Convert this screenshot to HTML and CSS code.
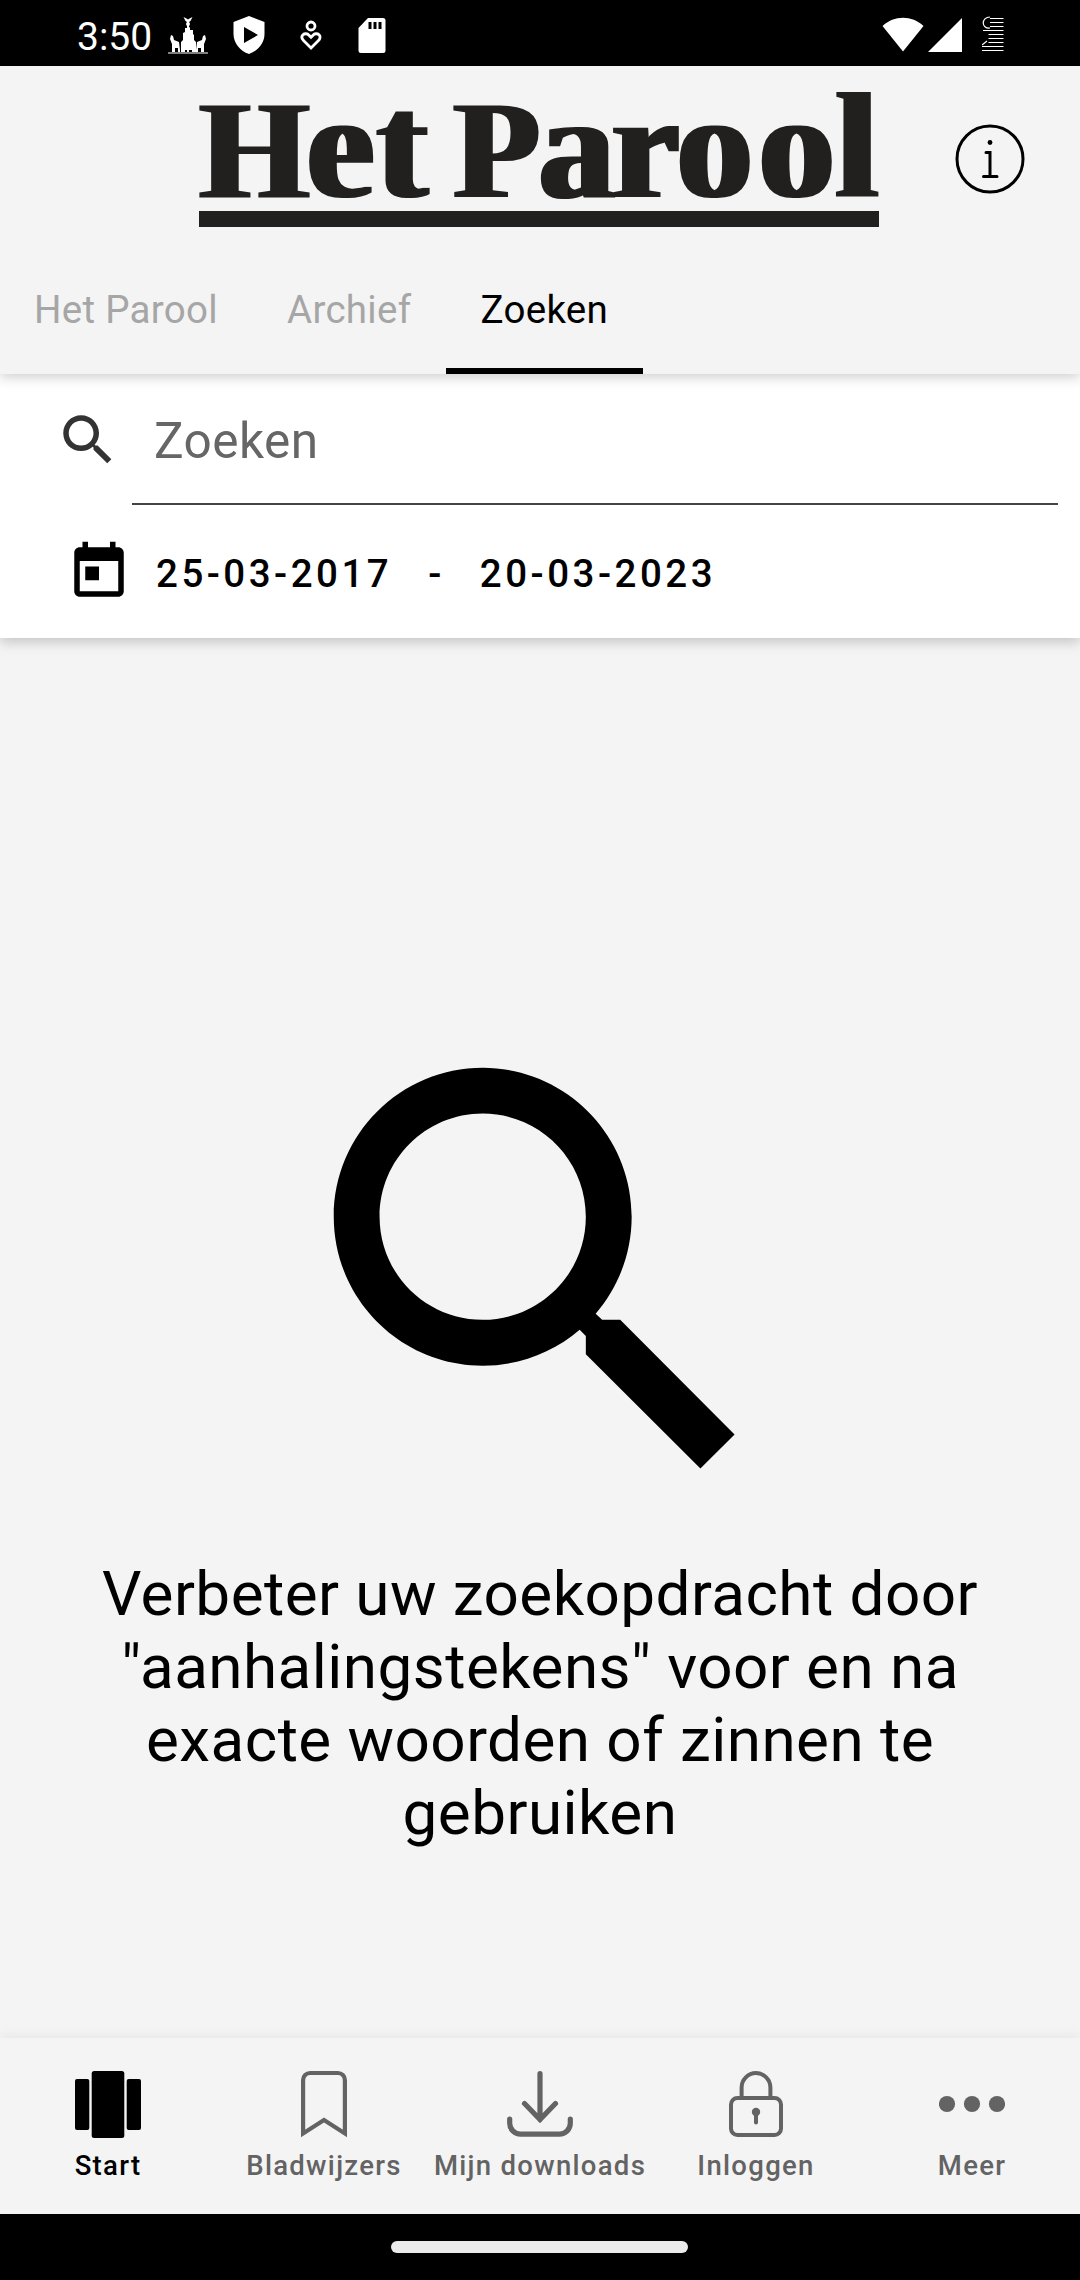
FILE: index.html
```html
<!DOCTYPE html>
<html lang="nl">
<head>
	<meta charset="utf-8">
	<title>Het Parool</title>
	<link rel="stylesheet" href="styles.css">
</head>
<body>
	<div class="statusbar">
		<span class="time">3:50</span>
		<svg class="ic-castle" width="42" height="38" viewBox="0 0 42 38" fill="#fff">
			<path d="M1 36.500h40v1H1zM5 36v-8l-2-5 1-4 2 1 1 4 5 2 1 8v2h-2v-4H8v4zM37 36v-8l2-5-1-4-2 1-1 4-5 2-1 8v2h2v-4h3v4z"/>
			<path d="M14 36V26l2-2v-7l2-1v-4h2l1-3 2 3v2h3v4l1 1v5l2 2v10h-4v-2h-3v2h-2v-2h-2v2z"/>
			<path d="M16.500 1l3 1.500 1.500 1 1.500-1 3-1.500-2 4-1.500 1v6h-2V6l-1.500-1z"/>
			<circle cx="21" cy="8" r="2"/>
		</svg>
		<svg class="ic-shield" width="32" height="38" viewBox="0 0 32 38" fill="#fff" fill-rule="evenodd">
			<path d="M16 0l15.500 6v12c0 9-6.500 17-15.500 20C7 35 .5 27 .5 18V6zM11 11v16l14-8z"/>
		</svg>
		<svg class="ic-heart" width="24" height="32" viewBox="0 0 24 32" fill="none" stroke="#fff" stroke-width="2.800">
			<circle cx="12" cy="6" r="4"/>
			<path d="M12 28l-7.500-7.500c-2-2-2-4.200-.5-5.700s4.500-1.500 6 .5l2 2 2-2c1.500-2 4.500-2 6-.5s1.500 3.700-.5 5.700z"/>
		</svg>
		<svg class="ic-sd" width="28" height="35" viewBox="0 0 28 35">
			<path fill="#fff" d="M10 0h15a2.500 2.500 0 0 1 2.500 2.500v30A2.500 2.500 0 0 1 25 35H3a2.500 2.500 0 0 1-2.500-2.500V10z"/>
			<path d="M10.500 4h3v7h-3zM15.500 4h3v7h-3zM20.500 4h3v7h-3z"/>
		</svg>
		<svg class="ic-wifi" width="42" height="35" viewBox="0 0 42 35" fill="#fff"><path d="M.5 9C12-2 30-2 41.500 9L21 34.500z"/></svg>
		<svg class="ic-signal" width="34" height="34" viewBox="0 0 34 34" fill="#fff"><path d="M34 0v34H0z"/></svg>
		<svg class="ic-battery" width="22" height="36" viewBox="0 0 22 36" fill="none" stroke="#fff" stroke-width="1.200">
			<path d="M8 2.500h13.500M8 6.500h13.500M8 10.500h13.500M1 14.500h20.500M6.500 18.500h15M6.500 22.500h15M6.500 26.500h15M0 30.500h21.500M0 34.500h21.500"/>
			<path d="M8 1C-1 1-1 13 8 12M0 29l5-4"/>
		</svg>
	</div>

	<div class="header">
		<svg class="logo" width="680" height="140" viewBox="0 0 680 140" fill="#21201e">
			<!-- thickens the stems only, serifs stay thin -->
			<filter id="fat" x="-5%" width="110%" color-interpolation-filters="sRGB"><feMorphology operator="dilate" radius="3 0"/></filter>
			<g class="logo-text" filter="url(#fat)">
				<text y="111" x="1 108 178"><tspan class="cap">H</tspan>et</text>
				<text y="111" x="255 340 413 478 560 637"><tspan class="cap">P</tspan>arool</text>
			</g>
			<rect y="125" width="680" height="16"/>
		</svg>
		<svg class="info" width="70" height="70" viewBox="0 0 70 70" fill="none" stroke="#000" stroke-width="3" stroke-linecap="round">
			<circle cx="35" cy="35" r="33"/>
			<path d="M31 28.500h4v24M28.500 52.500h13.500"/>
			<circle cx="35" cy="18.500" r="2.400" fill="#000" stroke="none"/>
		</svg>
		<div class="tabs">
			<div class="tab">Het Parool</div>
			<div class="tab">Archief</div>
			<div class="tab active">Zoeken</div>
		</div>
	</div>

	<div class="search">
		<div class="search-row">
			<svg width="66" height="66" viewBox="0 0 24 24" fill="#333"><path d="M15.500 14h-.79l-.28-.27C15.410 12.590 16 11.110 16 9.500 16 5.910 13.090 3 9.500 3S3 5.910 3 9.500 5.910 16 9.500 16c1.610 0 3.090-.59 4.230-1.570l.27.28v.79l5 4.990L20.490 19l-4.990-5zm-6 0C7.010 14 5 11.990 5 9.500S7.010 5 9.500 5 14 7.010 14 9.500 11.990 14 9.500 14z"/></svg>
			<div class="field">Zoeken</div>
		</div>
		<div class="date-row">
			<svg width="66" height="66" viewBox="0 0 24 24"><path d="M19 3h-1V1h-2v2H8V1H6v2H5c-1.110 0-1.990.9-1.990 2L3 19c0 1.100.89 2 2 2h14c1.100 0 2-.9 2-2V5c0-1.100-.9-2-2-2zm0 16H5V8h14v11zM7 10h5v5H7z"/></svg>
			<span class="date from">25-03-2017</span>
			<span class="date dash">-</span>
			<span class="date">20-03-2023</span>
		</div>
	</div>

	<div class="content">
		<svg width="550" height="550" viewBox="0 0 24 24"><path d="M15.500 14h-.79l-.28-.27C15.410 12.590 16 11.110 16 9.500 16 5.910 13.090 3 9.500 3S3 5.910 3 9.500 5.910 16 9.500 16c1.610 0 3.090-.59 4.230-1.570l.27.28v.79l5 4.990L20.490 19l-4.990-5zm-6 0C7.010 14 5 11.990 5 9.500S7.010 5 9.500 5 14 7.010 14 9.500 11.990 14 9.500 14z"/></svg>
		<p class="hint">Verbeter uw zoekopdracht door<br>"aanhalingstekens" voor en na<br>exacte woorden of zinnen te<br>gebruiken</p>
	</div>

	<div class="nav">
		<div class="nav-item active">
			<svg width="66" height="68" viewBox="0 0 66 68">
				<rect y="9" width="14.300" height="51" rx="2"/>
				<rect x="16.700" y="1" width="32.600" height="67" rx="2.500"/>
				<rect x="51.700" y="9" width="14.300" height="51" rx="2"/>
			</svg>
			<span>Start</span>
		</div>
		<div class="nav-item">
			<svg width="66" height="68" viewBox="0 0 66 68" fill="none" stroke="#636363" stroke-width="4.200">
				<path d="M12.100 63.500V10a7 7 0 0 1 7-7h27.800a7 7 0 0 1 7 7v53.500L33 50z"/>
			</svg>
			<span>Bladwijzers</span>
		</div>
		<div class="nav-item">
			<svg width="66" height="68" viewBox="0 0 66 68" fill="none" stroke="#636363" stroke-width="5.200" stroke-linecap="round">
				<path d="M33 3.500v46M17.500 33.500L33 49.500l15.500-16M2.700 49v4a11 11 0 0 0 11 11.200h38.600a11 11 0 0 0 11-11.200v-4"/>
			</svg>
			<span>Mijn downloads</span>
		</div>
		<div class="nav-item">
			<svg width="66" height="68" viewBox="0 0 66 68" fill="none" stroke="#636363" stroke-width="4">
				<rect x="8" y="28" width="50" height="37" rx="6.500"/>
				<path d="M18.600 28V17.500a14.400 14.400 0 0 1 28.800 0V28"/>
				<circle cx="33" cy="42" r="4.200" fill="#636363" stroke="none"/>
				<path d="M33 42v10.500" stroke-linecap="round"/>
			</svg>
			<span>Inloggen</span>
		</div>
		<div class="nav-item">
			<svg width="66" height="68" viewBox="0 0 66 68" fill="#636363">
				<circle cx="8" cy="34" r="8.100"/>
				<circle cx="33" cy="34" r="8.100"/>
				<circle cx="58" cy="34" r="8.100"/>
			</svg>
			<span>Meer</span>
		</div>
	</div>

	<div class="gesture"><div class="pill"></div></div>
</body>
</html>
```

FILE: styles.css
```css
* {
	box-sizing: border-box;
}

body {
	margin: 0;
	width: 1080px;
	height: 2280px;
	display: flex;
	flex-direction: column;
	overflow: hidden;
	background: #f4f4f4;
	color: #000;
	font-family: Roboto, sans-serif;
}

svg {
	display: block;
	flex: none;
}

.statusbar {
	height: 66px;
	display: flex;
	align-items: flex-start;
	padding: 16px 76px 0 77px;
	background: #000;
	color: #fff;
}

.time {
	width: 90px;
	margin-top: -1px;
	font-size: 39px;
	line-height: 44px;
}

.ic-shield {
	margin-left: 24px;
}

.ic-heart {
	margin: 4px 0 0 34px;
}

.ic-sd {
	margin: 2px 0 0 35px;
}

.ic-wifi {
	margin: 1px 4px 0 auto;
}

.ic-signal {
	margin: 2px 20px 0 0;
}

.header {
	position: relative;
	z-index: 2;
	height: 308px;
	display: grid;
	grid-template-columns: 199px 680px 1fr;
	grid-template-rows: 180px 128px;
	background: #f4f4f4;
	box-shadow: 0 3px 12px rgba(0, 0, 0, 0.2);
}

.logo {
	grid-column: 2;
	margin-top: 20px;
	overflow: visible;
}

.logo-text {
	font-family: "Liberation Serif", serif;
	font-weight: bold;
	font-size: 151px;
}

.cap {
	font-size: 140px;
}

.info {
	margin: 58px 0 0 76px;
}

.tabs {
	grid-column: 1 / 4;
	display: flex;
}

.tab {
	padding: 39px 35px 0 34px;
	font-size: 38.5px;
	letter-spacing: 0.3px;
	line-height: 50px;
	color: #a6a6a6;
}

.tab.active {
	color: #000;
	border-bottom: 6px solid #000;
}

.search {
	position: relative;
	z-index: 1;
	height: 264px;
	background: #fff;
	box-shadow: 0 4px 12px rgba(0, 0, 0, 0.2);
}

.search-row {
	height: 131px;
	display: flex;
	padding: 33px 22px 0 55px;
}

.field {
	flex: 1;
	height: 98px;
	margin-left: 11px;
	padding-left: 22px;
	border-bottom: 2px solid #444;
	font-size: 49.5px;
	letter-spacing: 0.45px;
	line-height: 68px;
	color: #666;
}

.date-row {
	display: flex;
	padding: 34px 0 0 66px;
}

.date {
	font-size: 38.5px;
	font-weight: 500;
	letter-spacing: 3.5px;
	line-height: 70px;
}

.from {
	margin-left: 24px;
}

.dash {
	margin: 0 35px 0 36px;
}

.content {
	flex: 1;
	display: flex;
	flex-direction: column;
	align-items: center;
	padding-top: 361px;
}

.hint {
	margin: 8px 0 0;
	font-size: 62px;
	letter-spacing: 0.45px;
	line-height: 73px;
	text-align: center;
	white-space: nowrap;
}

.nav {
	height: 176px;
	display: grid;
	grid-template-columns: repeat(5, 1fr);
	box-shadow: 0 -2px 12px rgba(0, 0, 0, 0.06);
}

.nav-item {
	display: flex;
	flex-direction: column;
	align-items: center;
	padding-top: 32px;
	font-size: 27.5px;
	font-weight: 500;
	letter-spacing: 1.3px;
	line-height: 36px;
	white-space: nowrap;
	color: #636363;
}

.nav-item span {
	margin-top: 10px;
}

.nav-item.active {
	color: #000;
}

.gesture {
	height: 66px;
	padding-top: 27px;
	background: #000;
}

.pill {
	width: 297px;
	height: 12px;
	margin-left: 391px;
	border-radius: 6px;
	background: #ebebeb;
}
```
